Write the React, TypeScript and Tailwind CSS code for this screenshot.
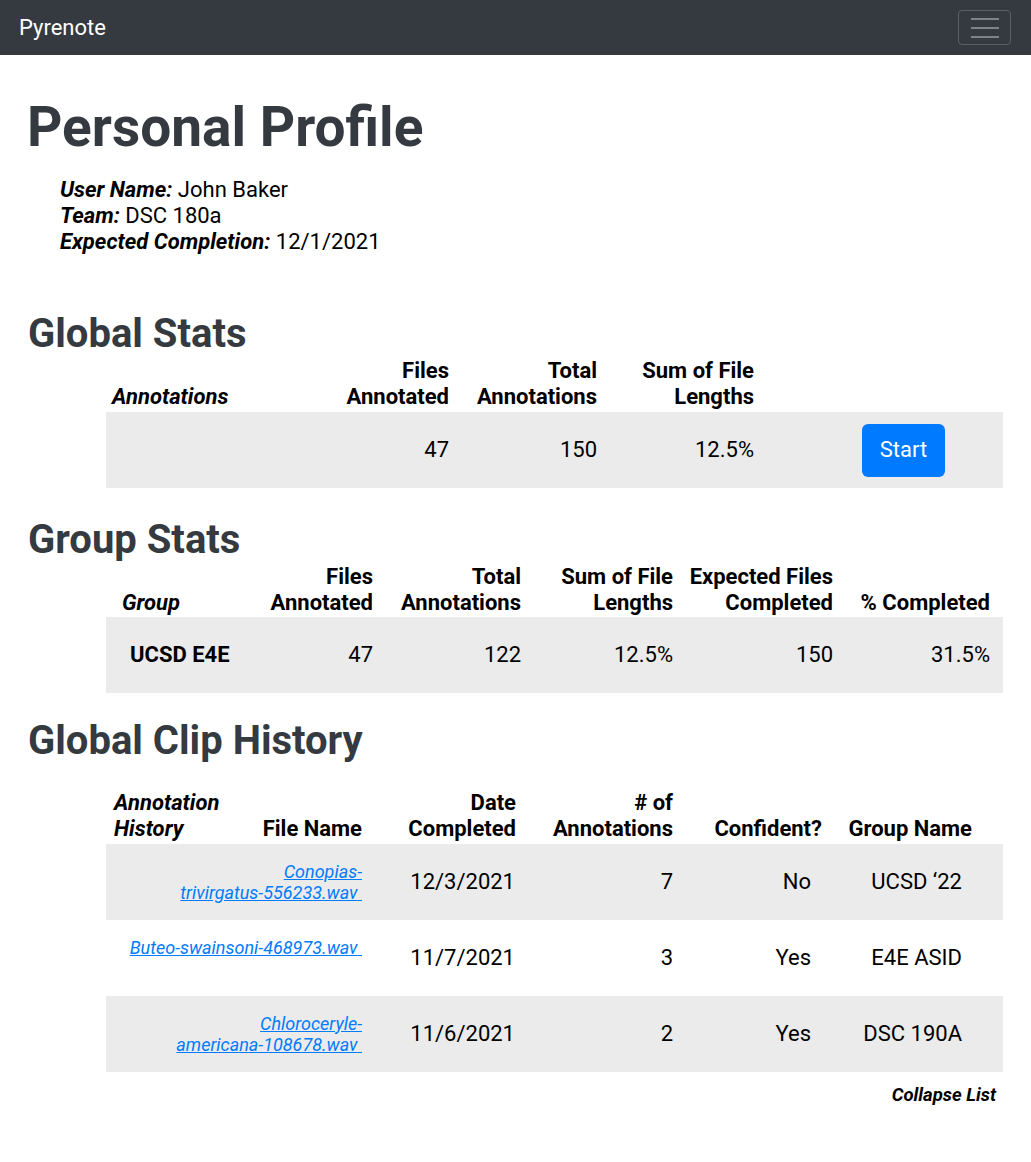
import React from "react";

const font = "font-['Roboto','Liberation_Sans',sans-serif]";

const Navbar = () => (
    <div className="h-[55px] bg-[#343a40] flex items-center justify-between pl-[19px] pr-[20px]">
        <span className="text-white text-[22px] leading-none">Pyrenote</span>
        <div className="w-[53px] h-[35px] border border-[#5b6066] rounded-[4px] flex flex-col items-center justify-center gap-[7px]">
            <span className="block w-[28px] h-[2px] bg-[#7f8388]" />
            <span className="block w-[28px] h-[2px] bg-[#7f8388]" />
            <span className="block w-[28px] h-[2px] bg-[#7f8388]" />
        </div>
    </div>
);

const SectionTitle = ({ children }: { children: React.ReactNode }) => (
    <h2 className="text-[40px] leading-[48px] font-bold text-[#343a40] pl-[28px]">{children}</h2>
);

const historyRows = [
    { file: ["Conopias-", "trivirgatus-556233.wav"], date: "12/3/2021", count: "7", confident: "No", group: "UCSD \u201822", gray: true, top: false },
    { file: ["Buteo-swainsoni-468973.wav"], date: "11/7/2021", count: "3", confident: "Yes", group: "E4E ASID", gray: false, top: true },
    { file: ["Chloroceryle-", "americana-108678.wav"], date: "11/6/2021", count: "2", confident: "Yes", group: "DSC 190A", gray: true, top: false },
];

export default function App() {
    return (
        <div className={`${font} bg-white min-h-[1162px] text-black`}>
            <Navbar />

            <h1 className="text-[55px] leading-[64px] font-bold text-[#343a40] pl-[27px] mt-[40px]">
                Personal Profile
            </h1>
            <div className="pl-[60px] mt-[18px] text-[22px] leading-[26px]">
                <p><b><i>User Name:</i></b> John Baker</p>
                <p><b><i>Team:</i></b> DSC 180a</p>
                <p><b><i>Expected Completion:</i></b> 12/1/2021</p>
            </div>

            <div className="mt-[55px]">
                <SectionTitle>Global Stats</SectionTitle>
                <div className="ml-[106px] w-[897px] text-[22px] leading-[26px]">
                    <div className="grid grid-cols-[194px_149px_148px_157px_1fr] items-end font-bold h-[54px] pb-[2px]">
                        <i className="pl-[6px]">Annotations</i>
                        <span className="text-right">Files<br />Annotated</span>
                        <span className="text-right">Total<br />Annotations</span>
                        <span className="text-right">Sum of File<br />Lengths</span>
                        <span />
                    </div>
                    <div className="grid grid-cols-[194px_149px_148px_157px_1fr] items-center h-[76px] bg-[#ebebeb]">
                        <span />
                        <span className="text-right">47</span>
                        <span className="text-right">150</span>
                        <span className="text-right">12.5%</span>
                        <div className="pl-[108px]">
                            <button className="w-[83px] h-[53px] rounded-[6px] bg-[#007bff] text-white text-[22px]">Start</button>
                        </div>
                    </div>
                </div>
            </div>

            <div className="mt-[28px]">
                <SectionTitle>Group Stats</SectionTitle>
                <div className="ml-[106px] w-[897px] text-[22px] leading-[26px]">
                    <div className="grid grid-cols-[144px_123px_148px_152px_160px_1fr] items-end font-bold h-[53px] pb-[2px]">
                        <i className="pl-[16px]">Group</i>
                        <span className="text-right">Files<br />Annotated</span>
                        <span className="text-right">Total<br />Annotations</span>
                        <span className="text-right">Sum of File<br />Lengths</span>
                        <span className="text-right">Expected Files<br />Completed</span>
                        <span className="text-right pr-[13px]">% Completed</span>
                    </div>
                    <div className="grid grid-cols-[144px_123px_148px_152px_160px_1fr] items-center h-[76px] bg-[#ebebeb]">
                        <b className="pl-[24px]">UCSD E4E</b>
                        <span className="text-right">47</span>
                        <span className="text-right">122</span>
                        <span className="text-right">12.5%</span>
                        <span className="text-right">150</span>
                        <span className="text-right pr-[13px]">31.5%</span>
                    </div>
                </div>
            </div>

            <div className="mt-[24px]">
                <SectionTitle>Global Clip History</SectionTitle>
                <div className="ml-[106px] w-[897px] text-[22px] leading-[26px] mt-[23px]">
                    <div className="grid grid-cols-[134px_122px_154px_157px_149px_1fr] items-end font-bold h-[56px] pb-[2px]">
                        <i className="pl-[8px]">Annotation<br />History</i>
                        <span className="text-right">File Name</span>
                        <span className="text-right">Date<br />Completed</span>
                        <span className="text-right"># of<br />Annotations</span>
                        <span className="text-right">Confident?</span>
                        <span className="text-right pr-[31px]">Group Name</span>
                    </div>
                    {historyRows.map((r) => (
                        <div
                            key={r.date}
                            className={`grid grid-cols-[134px_122px_154px_157px_138px_1fr] items-center h-[76px] ${r.gray ? "bg-[#ebebeb]" : ""}`}
                        >
                            <div className="col-span-2 flex justify-end">
                                <div className={`w-[240px] text-right text-[18px] leading-[21.5px] italic ${r.top ? "h-[43px]" : ""}`}>
                                    <a href="#" className="text-[#007bff] underline">
                                        {r.file.length > 1 ? (
                                            <>
                                                {r.file[0]}
                                                <br />
                                                {r.file[1]}{"\u00a0"}
                                            </>
                                        ) : (
                                            <>{r.file[0]}{"\u00a0"}</>
                                        )}
                                    </a>
                                </div>
                            </div>
                            <span className="text-right pr-[1px]">{r.date}</span>
                            <span className="text-right">{r.count}</span>
                            <span className="text-right">{r.confident}</span>
                            <span className="text-right pr-[41px]">{r.group}</span>
                        </div>
                    ))}
                    <p className="text-right pr-[7px] mt-[12px] text-[18.5px] leading-[22px] font-bold italic">Collapse List</p>
                </div>
            </div>
        </div>
    );
}
